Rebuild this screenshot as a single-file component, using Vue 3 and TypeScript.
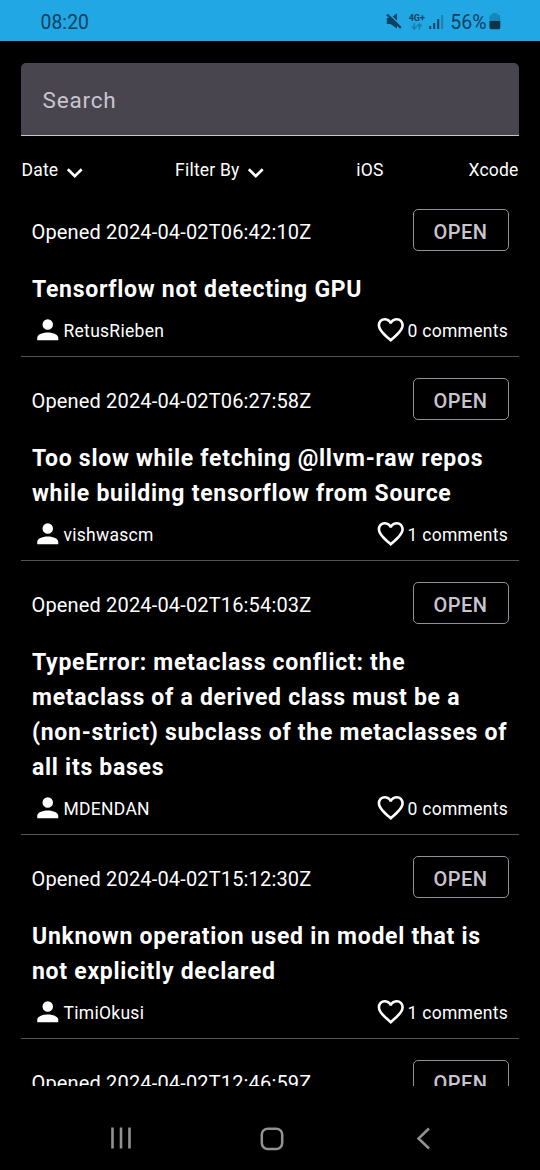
<script setup lang="ts">
interface Issue {
  id: number
  opened: string
  title: string[]
  user: string
  comments: number
}

const issues: Issue[] = [
  { id: 1, opened: '2024-04-02T06:42:10Z', title: ['Tensorflow not detecting GPU'], user: 'RetusRieben', comments: 0 },
  { id: 2, opened: '2024-04-02T06:27:58Z', title: ['Too slow while fetching @llvm-raw repos', 'while building tensorflow from Source'], user: 'vishwascm', comments: 1 },
  { id: 3, opened: '2024-04-02T16:54:03Z', title: ['TypeError: metaclass conflict: the', 'metaclass of a derived class must be a', '(non-strict) subclass of the metaclasses of', 'all its bases'], user: 'MDENDAN', comments: 0 },
  { id: 4, opened: '2024-04-02T15:12:30Z', title: ['Unknown operation used in model that is', 'not explicitly declared'], user: 'TimiOkusi', comments: 1 },
  { id: 5, opened: '2024-04-02T12:46:59Z', title: [], user: '', comments: 0 },
]
</script>

<template>
  <div class="screen">
    <header class="status">
      <span class="clock">08:20</span>
      <div class="indicators">
        <svg class="mute" width="16" height="17" viewBox="0 0 16 17">
          <path d="M.800 5h3.600L11 .500v15L4.400 11H.800z" fill="#0b4160" />
          <path d="M2 0 16 13.600" stroke="#22a7e5" stroke-width="1.500" />
          <path d="M1 1.500 14.800 14.900" stroke="#0b4160" stroke-width="2.300" />
        </svg>
        <div class="network">
          <span>4G+</span>
          <svg width="12" height="7" viewBox="0 0 12 7" fill="none" stroke="#167fae" stroke-width="1.500">
            <path d="M3.200 0v5.800M.800 3.600l2.400 2.500 2.400-2.500M8.400 6.800V1M6 3.300 8.400.900l2.400 2.400" />
          </svg>
        </div>
        <svg class="signal" width="15" height="16" viewBox="0 0 15 16">
          <path d="M1.200 12v3M5.200 9v6M9.200 5v10" stroke="#0b4160" stroke-width="2" />
          <path d="M13.200 1v14" stroke="#1782b4" stroke-width="2" />
        </svg>
        <span class="percent">56%</span>
        <svg class="battery" width="12" height="17" viewBox="0 0 12 17">
          <path d="M3.200 0h5v2H10q1.300 0 1.300 1.300V8H.500V3.300Q.500 2 1.800 2h1.400z" fill="#1787ba" />
          <path d="M.500 8h10.800v6.800q0 1.400-1.400 1.400H1.900q-1.400 0-1.400-1.400z" fill="#0b344b" />
        </svg>
      </div>
    </header>

    <main class="content">
      <div class="search">Search</div>
      <nav class="filters">
        <span class="filter">Date
          <svg class="icon" viewBox="0 0 24 24"><path d="M7.410 8.580 12 13.170l4.590-4.590L18 10l-6 6-6-6z" /></svg>
        </span>
        <span class="filter">Filter By
          <svg class="icon" viewBox="0 0 24 24"><path d="M7.410 8.580 12 13.170l4.590-4.590L18 10l-6 6-6-6z" /></svg>
        </span>
        <span class="filter">iOS</span>
        <span class="filter">Xcode</span>
      </nav>

      <section class="list">
        <article v-for="issue in issues" :key="issue.id" class="issue">
          <div class="top">
            <span class="opened">Opened {{ issue.opened }}</span>
            <span class="state">OPEN</span>
          </div>
          <h2 class="title"><span v-for="line in issue.title" :key="line">{{ line }}</span></h2>
          <footer v-if="issue.user" class="meta">
            <div class="part user">
              <svg class="icon" viewBox="0 0 24 24"><path d="M12 4a4 4 0 1 1 0 8 4 4 0 0 1 0-8m0 10c4.420 0 8 1.790 8 4v2H4v-2c0-2.210 3.580-4 8-4z" /></svg>
              <span>{{ issue.user }}</span>
            </div>
            <div class="part">
              <svg class="icon" viewBox="0 0 24 24"><path d="m12.100 18.550-.1.100-.110-.100C7.140 14.240 4 11.390 4 8.500 4 6.500 5.500 5 7.500 5c1.540 0 3.040 1 3.570 2.360h1.860C13.460 6 14.960 5 16.500 5c2 0 3.500 1.500 3.500 3.500 0 2.890-3.140 5.740-7.900 10.050M16.500 3c-1.740 0-3.410.810-4.500 2.080C10.910 3.810 9.240 3 7.500 3 4.420 3 2 5.410 2 8.500c0 3.770 3.400 6.860 8.550 11.530L12 21.350l1.450-1.320C18.600 15.360 22 12.270 22 8.500 22 5.410 19.580 3 16.500 3z" /></svg>
              <span>{{ issue.comments }} comments</span>
            </div>
          </footer>
        </article>
      </section>
    </main>

    <nav class="system">
      <svg width="22" height="22" viewBox="0 0 22 22"><path d="M2.500 .500v21M11 .500v21M19.500 .500v21" stroke="#929292" stroke-width="2.600" /></svg>
      <svg width="24" height="24" viewBox="0 0 24 24"><rect x="1.800" y="1.700" width="20.400" height="20.400" rx="6" fill="none" stroke="#929292" stroke-width="2.500" /></svg>
      <svg width="24" height="24" viewBox="0 0 24 24"><path d="M17 1.500 6.500 11.500 17 21.500" fill="none" stroke="#929292" stroke-width="2.500" /></svg>
    </nav>
  </div>
</template>

<style>
body {
  background: #000;
}
</style>

<style scoped>
.screen {
  width: 540px;
  height: 1170px;
  display: flex;
  flex-direction: column;
  overflow: hidden;
  background: #000;
  color: #fff;
  font-family: Roboto, "Liberation Sans", sans-serif;
}
.status {
  height: 41px;
  flex: none;
  box-sizing: border-box;
  padding: 2px 39.500px 0 40.500px;
  display: flex;
  align-items: center;
  justify-content: space-between;
  background: #22a7e5;
  color: #0b4160;
}
.clock {
  padding-top: 2px;
  font-size: 19.300px;
  letter-spacing: 0.100px;
}
.indicators {
  display: flex;
  align-items: center;
}
.mute {
  margin-right: 6px;
  margin-bottom: 1px;
}
.network {
  display: flex;
  flex-direction: column;
  align-items: center;
  width: 17px;
  margin-right: 4px;
  font-size: 9px;
  line-height: 9px;
  font-weight: 700;
}
.signal {
  margin-right: 6px;
}
.percent {
  padding-top: 2px;
  font-size: 19.500px;
  margin-right: 2px;
}
.battery {
  margin-bottom: 1px;
}
.content {
  height: 1044.500px;
  flex: none;
  box-sizing: border-box;
  padding: 21.500px 21px 0;
  display: flex;
  flex-direction: column;
  overflow: hidden;
}
.search {
  height: 73.500px;
  flex: none;
  box-sizing: border-box;
  padding: 3px 21.500px 0;
  display: flex;
  align-items: center;
  border-radius: 5px 5px 0 0;
  border-bottom: 1px solid #cac4d0;
  background: #49454f;
  color: #cac4d0;
  font-size: 22.500px;
  letter-spacing: 0.800px;
}
.filters {
  height: 52px;
  flex: none;
  box-sizing: border-box;
  padding: 16px 0.500px 0 0.500px;
  display: flex;
  align-items: flex-start;
  justify-content: space-between;
  font-size: 17.500px;
  letter-spacing: 0.200px;
  line-height: 36px;
}
.filter {
  display: flex;
  align-items: flex-start;
  white-space: nowrap;
}
.icon {
  width: 31.500px;
  height: 31.500px;
  flex: none;
  fill: #fff;
}
.filter .icon {
  margin-top: 5px;
  margin-left: 0.500px;
}
.issue {
  box-sizing: border-box;
  padding: 21px 11px 10.500px 10.500px;
  border-bottom: 1px solid #555356;
}
.top {
  height: 42px;
  display: flex;
  align-items: center;
  justify-content: space-between;
}
.opened {
  padding-top: 3px;
  font-size: 20px;
  letter-spacing: 0.160px;
}
.state {
  width: 96px;
  height: 42px;
  box-sizing: border-box;
  margin-right: -0.500px;
  padding-top: 3px;
  display: flex;
  align-items: center;
  justify-content: center;
  border: 1.300px solid #938f99;
  border-radius: 5px;
  color: #cac4d0;
  font-size: 20px;
  font-weight: 500;
  letter-spacing: 0.500px;
}
.title {
  margin: 21px 0 7px;
  padding-left: 0.500px;
  display: flex;
  flex-direction: column;
  font-size: 23px;
  line-height: 35px;
  font-weight: 700;
  letter-spacing: 0.720px;
  white-space: nowrap;
}
.meta {
  height: 31.500px;
  display: flex;
  justify-content: space-between;
  font-size: 17.500px;
  letter-spacing: 0.280px;
  line-height: 34px;
}
.part {
  display: flex;
  align-items: flex-start;
}
.part .icon {
  margin-left: -0.700px;
  margin-right: 1px;
}
.user .icon {
  margin-left: 0;
  margin-right: 0.500px;
}
.system {
  flex: 1;
  padding: 21px 104px 0 110px;
  display: flex;
  align-items: flex-start;
  justify-content: space-between;
}
.system svg {
  margin-top: 20px;
}
</style>
